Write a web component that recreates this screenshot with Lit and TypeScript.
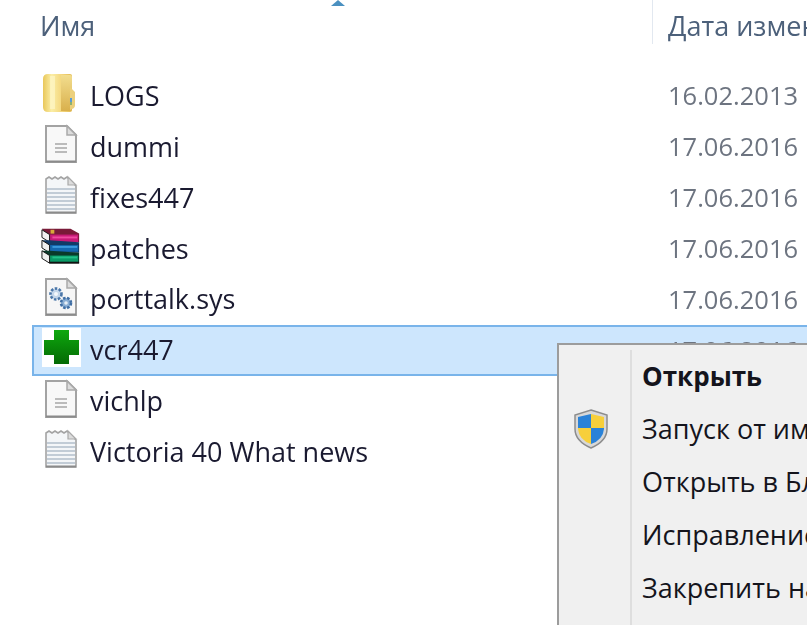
import { LitElement, html, css, svg } from "lit";
import { customElement } from "lit/decorators.js";

const folder = svg`<svg width="36" height="40" viewBox="2 0 36 40">
  <defs>
    <linearGradient id="fg" x1="0" x2="1" y1="0" y2="0"><stop offset="0" stop-color="#e9c75a"/><stop offset=".3" stop-color="#fbeea6"/><stop offset=".65" stop-color="#f3d67c"/><stop offset="1" stop-color="#e2bb55"/></linearGradient>
    <linearGradient id="fb" x1="0" x2="0" y1="0" y2="1"><stop offset="0" stop-color="#f2dd8e"/><stop offset="1" stop-color="#d9b04c"/></linearGradient>
  </defs>
  <path d="M7 1h22q2 0 2 2v34q0 2-2 2H7q-5 0-5-5V6q0-5 5-5z" fill="url(#fg)"/>
  <path d="M20 2h9q2 0 2 2v32q0 2-2 2h-9z" fill="url(#fb)"/>
  <path d="M29 14l5 5v13q0 3-3 4l-2 1z" fill="#ecd07c"/>
  <rect x="9" y="3" width="5" height="33" fill="#fdf6c8" opacity=".7"/>
  <rect x="29" y="25" width="2" height="4" fill="#5a9ad6"/><rect x="29" y="29" width="2" height="3" fill="#8cb070"/>
</svg>`;

const doc = svg`<svg width="36" height="40" viewBox="0 0 36 40">
  <path d="M3 2h21l9 9v27H3z" fill="#f8f8f8" stroke="#a3a3a3" stroke-width="2"/>
  <path d="M3 37.5h30" stroke="#8b8b8b" stroke-width="2"/>
  <path d="M24 2v9h9z" fill="#dcdcdc" stroke="#a9a9a9" stroke-width="1.5"/>
  <path d="M12 20h12M12 24h12M12 28h12" stroke="#a6a6a6" stroke-width="1.6"/>
</svg>`;

const note = svg`<svg width="36" height="40" viewBox="0 0 36 40">
  <path d="M3 4l3-2 3 2 3-2 3 2 3-2 3 2 3-2 9 9v27H3z" fill="#f4f6f8" stroke="#a3a3a3" stroke-width="1.6"/>
  <path d="M4 14h28M4 18h28M4 22h28M4 26h28M4 30h28M4 34h28" stroke="#c2ccd6" stroke-width="2"/>
  <path d="M3 37.5h30" stroke="#8b8b8b" stroke-width="2"/>
  <path d="M25 2v8h8z" fill="#dcdcdc" stroke="#a9a9a9" stroke-width="1.2"/>
</svg>`;

const rar = svg`<svg width="40" height="40" viewBox="0 0 42 42">
  <path d="M1 3h30l9 5v9H9z" fill="#7a1a38"/><path d="M9 9h30v8H9z" fill="#c81a78"/><path d="M12 11h26v2H12z" fill="#ee4aa0"/>
  <path d="M1 4l8 5v8l-8-5z" fill="#f0f0f0" stroke="#111" stroke-width="1"/>
  <path d="M1 15h8l31 2v11H9z" fill="#123a66"/><path d="M9 20h30v7H9z" fill="#1468b0"/><path d="M12 21h26v2H12z" fill="#3a98dc"/>
  <path d="M1 15l8 5v8l-8-5z" fill="#f0f0f0" stroke="#111" stroke-width="1"/>
  <path d="M1 26h8l31 2v11H9z" fill="#0a3a2a"/><path d="M9 31h30v7H9z" fill="#0a9a66"/><path d="M12 32h26v2H12z" fill="#22c088"/>
  <path d="M1 26l8 5v8l-8-5z" fill="#f0f0f0" stroke="#111" stroke-width="1"/>
  <path d="M9 38.5h31" stroke="#111" stroke-width="2"/><rect x="10" y="4" width="4" height="4" fill="#d8a83a"/>
</svg>`;

const sys = svg`<svg width="36" height="40" viewBox="0 0 36 40">
  <path d="M3 2h21l9 9v27H3z" fill="#f6f6f6" stroke="#a3a3a3" stroke-width="2"/>
  <path d="M3 37.5h30" stroke="#8b8b8b" stroke-width="2"/>
  <path d="M24 2v9h9z" fill="#dcdcdc" stroke="#a9a9a9" stroke-width="1.5"/>
  <circle cx="13" cy="17" r="5.5" fill="#c4d6ea" stroke="#4a76a8" stroke-width="2.6" stroke-dasharray="2.5 1.5"/>
  <circle cx="13" cy="17" r="2" fill="#f4f8fc"/>
  <circle cx="23" cy="26" r="5" fill="#8aaed4" stroke="#3f6ea4" stroke-width="2.6" stroke-dasharray="2.5 1.5"/>
  <circle cx="23" cy="26" r="1.8" fill="#e6eef6"/>
</svg>`;

const plus = svg`<svg width="39" height="39" viewBox="0 0 39 39">
  <defs><linearGradient id="pl" x1="0" x2="0" y1="0" y2="1"><stop offset="0" stop-color="#0ea80e"/><stop offset="1" stop-color="#046a04"/></linearGradient></defs>
  <rect width="39" height="39" fill="#fff"/>
  <path d="M12 2h15v10h10v15H27v9H12v-9H2V12h10z" fill="url(#pl)"/>
</svg>`;

const shield = svg`<svg width="36" height="40" viewBox="0 0 36 40">
  <path d="M18 1l16 5v14q0 12-16 19Q2 32 2 20V6z" fill="#d8d8d8" stroke="#8c8c8c" stroke-width="1.5"/>
  <path d="M18 5v14H5V8z" fill="#2a82d8"/><path d="M18 5l13 3v11H18z" fill="#f7cf3a"/>
  <path d="M5 19h13v16Q6 31 5 20z" fill="#f7cf3a"/><path d="M18 19h13v1q-1 11-13 15z" fill="#2a82d8"/>
</svg>`;

interface Row { icon: unknown; name: string; date: string; selected?: boolean; }

const rows: Row[] = [
  { icon: folder, name: "LOGS", date: "16.02.2013" },
  { icon: doc, name: "dummi", date: "17.06.2016" },
  { icon: note, name: "fixes447", date: "17.06.2016" },
  { icon: rar, name: "patches", date: "17.06.2016" },
  { icon: sys, name: "porttalk.sys", date: "17.06.2016" },
  { icon: plus, name: "vcr447", date: "17.06.2016", selected: true },
  { icon: doc, name: "vichlp", date: "" },
  { icon: note, name: "Victoria 40 What news", date: "" },
];

const menu = [
  { label: "Открыть", bold: true },
  { label: "Запуск от имени администратора", shield: true },
  { label: "Открыть в Блокноте" },
  { label: "Исправление неполадок" },
  { label: "Закрепить на начальном экране" },
];

@customElement("app-root")
export class AppRoot extends LitElement {
  static styles = css`
    :host {
      display: block;
      width: 807px;
      height: 625px;
      overflow: hidden;
      background: #fff;
      font-family: "Open Sans", "Noto Sans", sans-serif;
      font-size: 27px;
      color: #1a1a30;
    }
    .page { position: relative; width: 807px; height: 625px; overflow: hidden; filter: blur(0.4px); }
    .head { display: flex; height: 70.5px; }
    .head-name { flex: none; width: 612px; padding: 7px 0 0 40px; color: #4c607a; line-height: 37px; }
    .head-sep { flex: none; width: 1px; height: 44px; margin-right: 15px; background: #e2e8f0; }
    .head-date { padding-top: 7px; line-height: 37px; color: #4c607a; white-space: nowrap; }
    .sort { position: absolute; left: 331px; top: 0; width: 14px; height: 6px; }
    .row { display: flex; align-items: center; height: 50.86px; box-sizing: border-box; margin-left: 32px; border: 2px solid transparent; border-right: 0; }
    .row.sel { background: #cde6fd; border-color: #79b4ea; }
    .icon { width: 46px; margin-left: 4px; margin-bottom: 5px; display: flex; justify-content: center; flex: none; }
    .icon svg { display: block; }
    .name { width: 580px; margin-left: 6px; white-space: nowrap; flex: none; margin-top: -1px; }
    .date { color: #6d7480; white-space: nowrap; font-size: 25.5px; margin-left: -2px; margin-top: -1px; }
    .menu { position: absolute; left: 557px; top: 343px; width: 300px; height: 320px; background: #f0f0f0; border: 2px solid #9c9c9c; box-sizing: border-box; display: flex; flex-direction: column; padding-top: 4px; font-size: 27px; }
    .gutter { position: absolute; left: 71px; top: 5px; bottom: 0; width: 2px; background: #dedede; }
    .item { display: flex; align-items: center; height: 53px; flex: none; white-space: nowrap; color: #14141c; }
    .item.bold { font-weight: 700; font-size: 26px; }
    .mi { width: 83px; flex: none; display: flex; padding-left: 14px; box-sizing: border-box; }
    .mi svg { display: block; }
  `;

  render() {
    return html`<div class="page">
      <div class="head">
        <div class="head-name">Имя</div>
        <div class="head-sep"></div>
        <div class="head-date">Дата изменения</div>
      </div>
      <svg class="sort" viewBox="0 0 14 6"><path d="M7 0L14 6H0z" fill="#4a90c0"/></svg>
      <div class="list">
        ${rows.map(
          (r) => html`<div class="row ${r.selected ? "sel" : ""}">
            <div class="icon">${r.icon}</div>
            <div class="name">${r.name}</div>
            <div class="date">${r.date}</div>
          </div>`
        )}
      </div>
      <div class="menu">
        <div class="gutter"></div>
        ${menu.map(
          (m) => html`<div class="item ${m.bold ? "bold" : ""}">
            <div class="mi">${m.shield ? shield : ""}</div>
            <div>${m.label}</div>
          </div>`
        )}
      </div>
    </div>`;
  }
}
